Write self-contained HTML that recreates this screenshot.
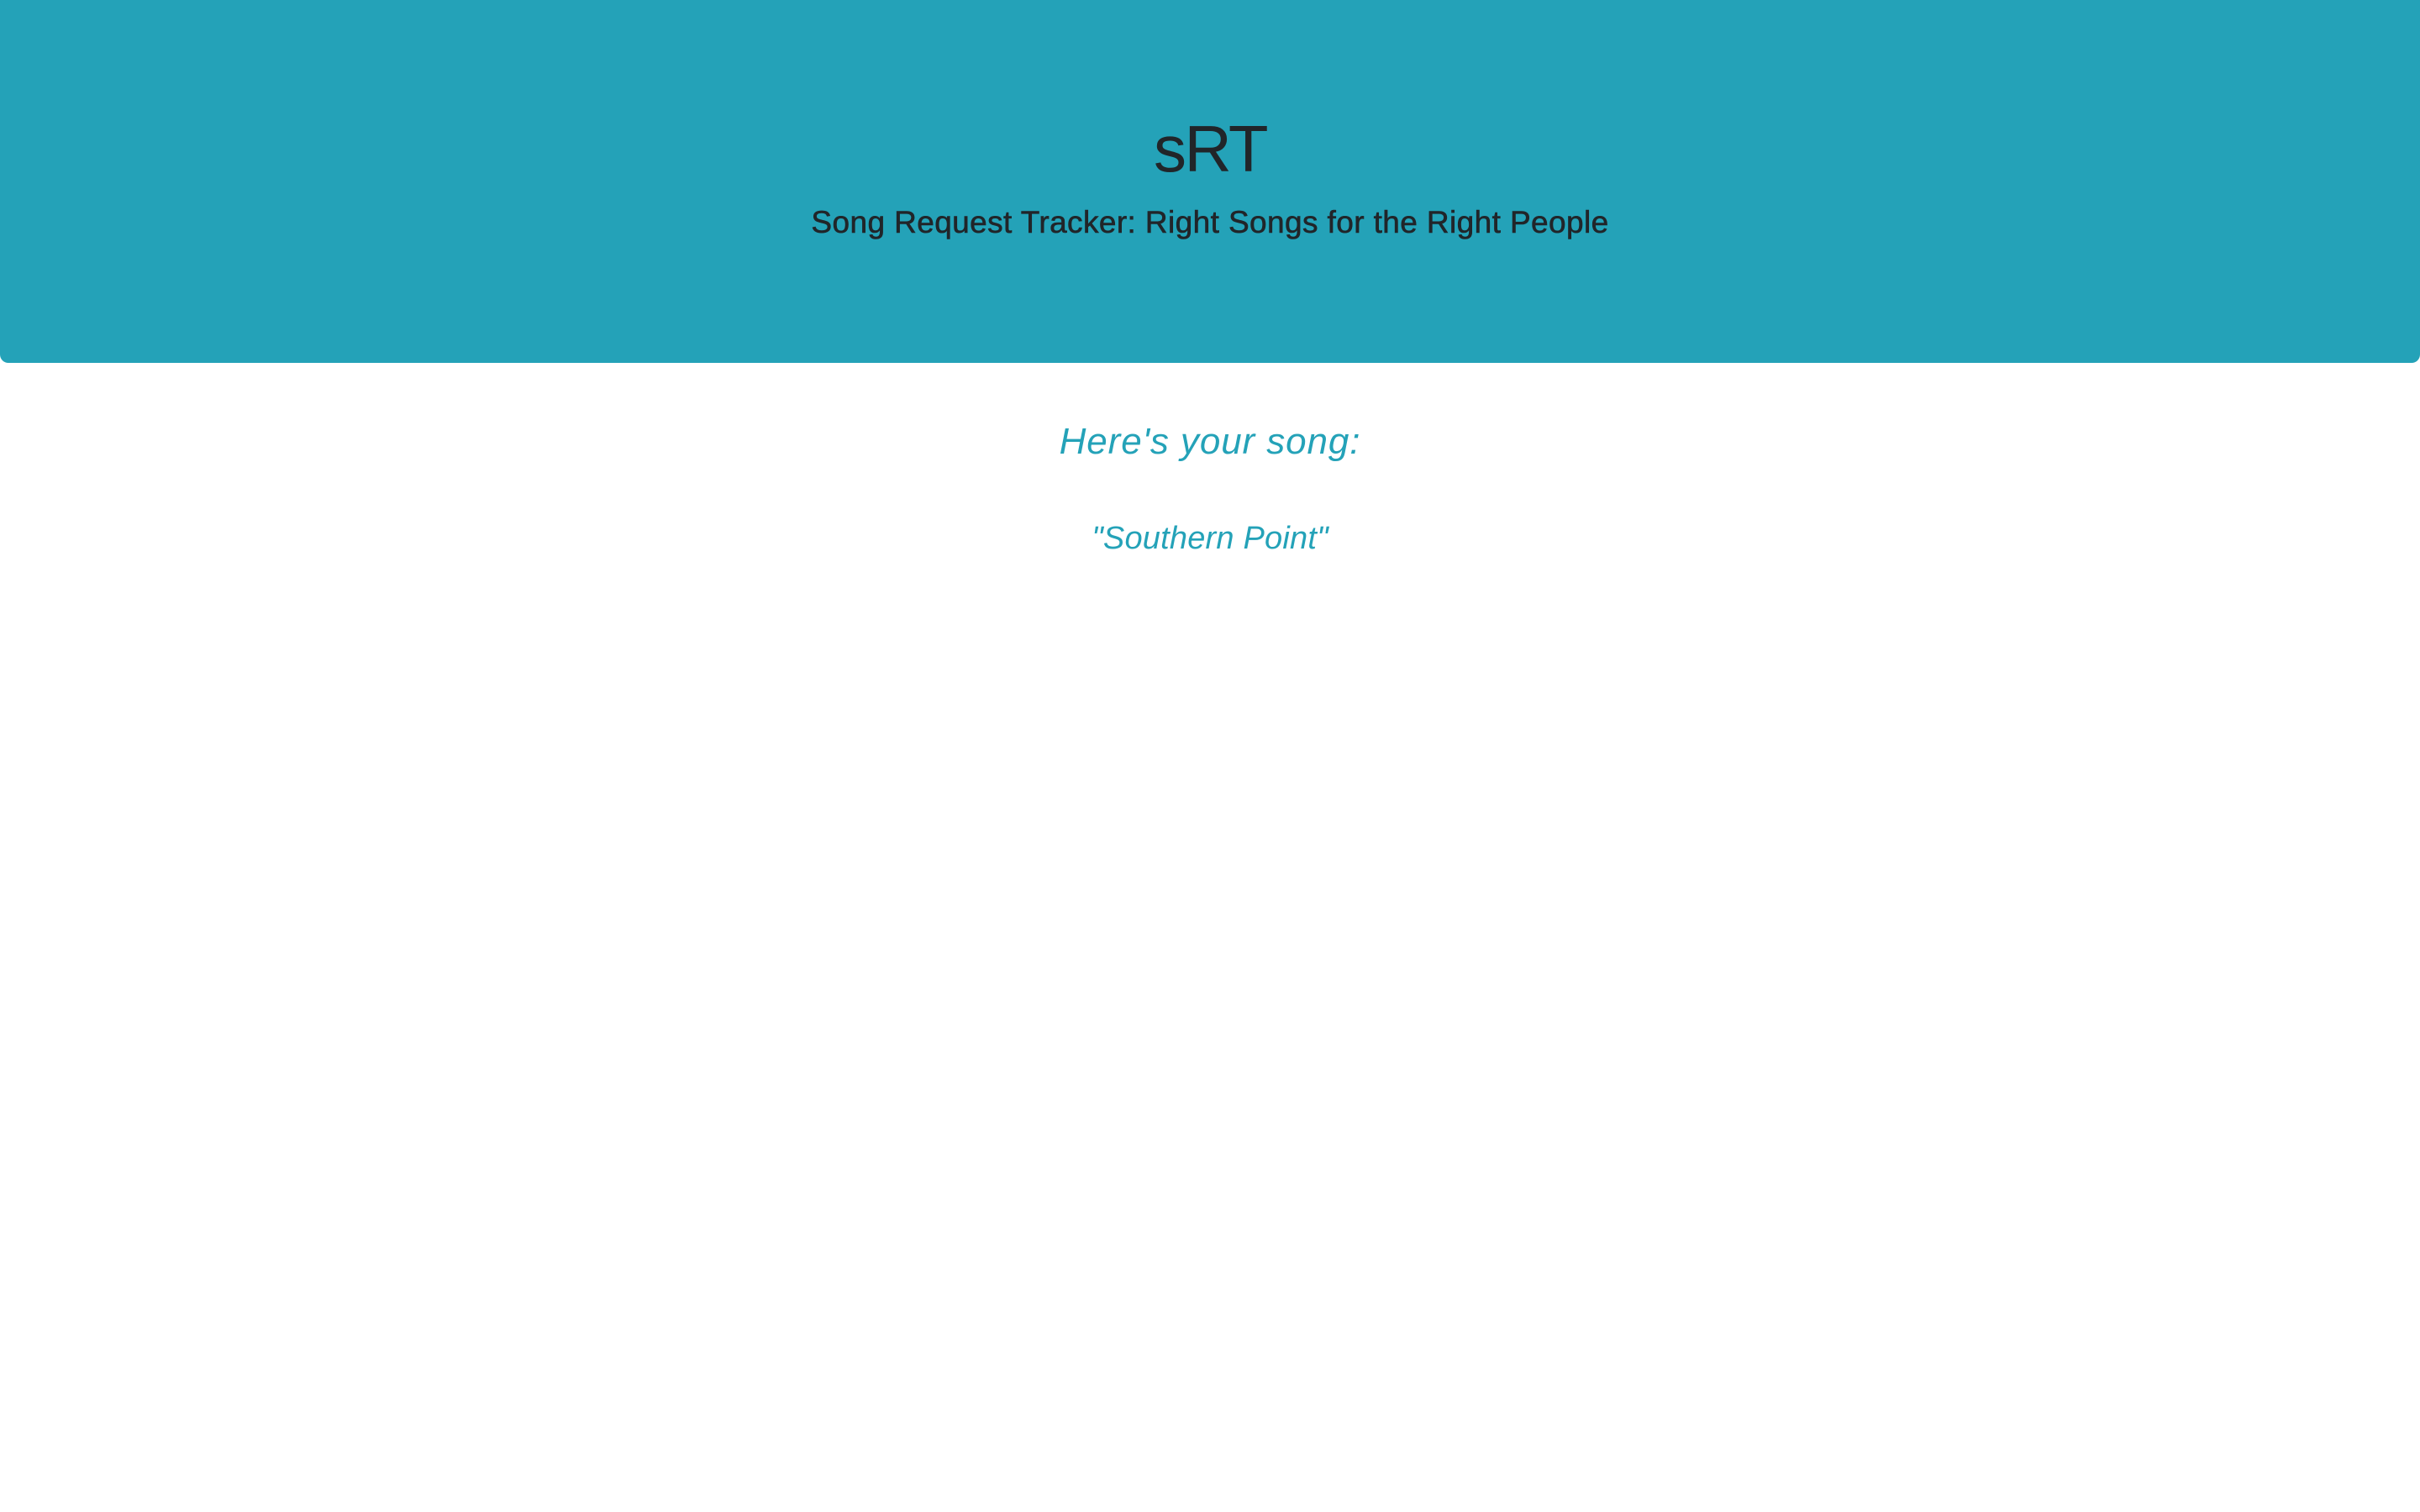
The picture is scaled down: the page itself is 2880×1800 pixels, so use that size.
<!DOCTYPE html>
<html><head><meta charset="utf-8"><style>
html,body{margin:0;padding:0;width:2880px;height:1800px;background:#fff;overflow:hidden;font-family:"Liberation Sans",sans-serif}
.hdr{position:absolute;left:0;top:0;width:2880px;height:432px;background:#24a2b8;border-radius:0 0 10px 10px}
.t{position:absolute;left:0;width:2880px;text-align:center;white-space:nowrap;line-height:1}
</style></head><body>
<div class="hdr"></div>
<div class="t" style="top:138px;font-size:78px;color:#212529;letter-spacing:-2.5px">sRT</div>
<div class="t" style="top:246px;font-size:37px;color:#212529;letter-spacing:0.4px;-webkit-text-stroke:0.6px #212529">Song Request Tracker: Right Songs for the Right People</div>
<div class="t" style="top:504px;font-size:44px;color:#24a2b8;font-style:italic;letter-spacing:0.9px">Here's your song:</div>
<div class="t" style="top:622px;font-size:38px;color:#24a2b8;font-style:italic;letter-spacing:0.2px">"Southern Point"</div>
</body></html>
